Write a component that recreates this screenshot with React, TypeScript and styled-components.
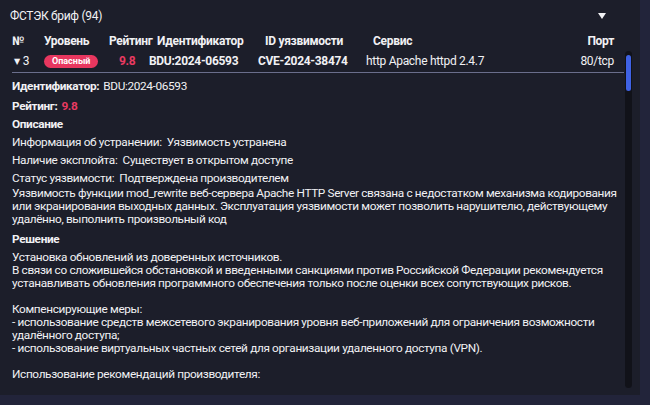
import React from "react";
import styled, { createGlobalStyle } from "styled-components";

const Global = createGlobalStyle`
  html, body { margin: 0; padding: 0; background: #22243a; }
  body {
    font-family: Roboto, "Noto Sans", "DejaVu Sans", sans-serif;
    color: #f1f1f4;
    letter-spacing: -0.3px;
  }
  * { box-sizing: border-box; }
`;

const Page = styled.div`
  width: 650px;
  height: 405px;
  padding: 0 10px 10px 0;
  background: #22243a;
`;

const Panel = styled.div`
  width: 640px;
  height: 395px;
  background: #1c1e2a;
  display: flex;
  flex-direction: column;
  padding-left: 10px;
  overflow: hidden;
`;

const TitleBar = styled.div`
  height: 31px;
  display: flex;
  align-items: center;
  justify-content: space-between;
  padding: 0 34px 0 0;
  font-size: 12px;
`;

const Caret = styled.span`
  width: 0;
  height: 0;
  border-left: 4.5px solid transparent;
  border-right: 4.5px solid transparent;
  border-top: 6px solid #f1f1f4;
`;

const cols = "32px 60px 45px 109px 108px 1fr 60px";

const HeaderRow = styled.div`
  display: grid;
  grid-template-columns: ${cols};
  align-items: center;
  height: 19px;
  padding: 0 26px 0 2px;
  font-size: 12px;
  font-weight: 700;
`;

const HeadCell = styled.div<{ $pad?: number; $right?: boolean }>`
  padding-left: ${(p) => p.$pad ?? 0}px;
  text-align: ${(p) => (p.$right ? "right" : "left")};
  white-space: nowrap;
`;

const Body = styled.div`
  flex: 1;
  display: flex;
  min-height: 0;
  padding-bottom: 7px;
`;

const Content = styled.div`
  flex: 1;
  overflow: hidden;
  min-width: 0;
`;

const ScrollTrack = styled.div`
  width: 7px;
  margin: 1px 8px 0 1px;
  background: #111219;
  border-radius: 4px;
  padding: 4px 1px;
`;

const ScrollThumb = styled.div`
  height: 36px;
  background: #3f62e4;
  border-radius: 3px;
`;

const DataRow = styled.div`
  display: grid;
  grid-template-columns: ${cols};
  align-items: center;
  height: 22px;
  padding: 0 10px 0 2px;
  font-size: 12px;
`;

const Cell = styled.div<{ $bold?: boolean; $pad?: number; $right?: boolean; $pink?: boolean }>`
  font-weight: ${(p) => (p.$bold ? 700 : 400)};
  padding-left: ${(p) => p.$pad ?? 0}px;
  color: ${(p) => (p.$pink ? "#ea3a62" : "inherit")};
  white-space: nowrap;
  display: flex;
  align-items: center;
  justify-content: ${(p) => (p.$right ? "flex-end" : "flex-start")};
`;

const Expander = styled.span`
  font-size: 8px;
  margin-right: 3px;
`;

const Badge = styled.span`
  display: inline-flex;
  align-items: center;
  justify-content: center;
  height: 13px;
  padding: 0 8px;
  border-radius: 7px;
  background: #e8375f;
  color: #fff;
  font-size: 9px;
  font-weight: 700;
  letter-spacing: 0;
`;

const Divider = styled.div`
  height: 1px;
  background: #6a6e8c;
  margin: 0 0 0 2px;
`;

const Details = styled.div`
  padding: 4px 2px 0 2px;
  font-size: 11.8px;
  letter-spacing: -0.35px;
`;

const Field = styled.div<{ $gap?: number }>`
  line-height: 18px;
  margin-bottom: ${(p) => p.$gap ?? 0}px;
`;

const Label = styled.span`
  font-weight: 700;
  margin-right: 4px;
`;

const Pink = styled.span`
  color: #ea3a62;
  font-weight: 700;
`;

const Heading = styled.div`
  font-weight: 700;
  line-height: 18px;
`;

const Para = styled.div<{ $top?: number; $bottom?: number }>`
  line-height: 13px;
  white-space: pre-line;
  margin-top: ${(p) => p.$top ?? 0}px;
  margin-bottom: ${(p) => p.$bottom ?? 0}px;
`;

const solution = `Установка обновлений из доверенных источников.
В связи со сложившейся обстановкой и введенными санкциями против Российской Федерации рекомендуется устанавливать обновления программного обеспечения только после оценки всех сопутствующих рисков.

Компенсирующие меры:
- использование средств межсетевого экранирования уровня веб-приложений для ограничения возможности удалённого доступа;
- использование виртуальных частных сетей для организации удаленного доступа (VPN).

Использование рекомендаций производителя:`;

export default function App() {
  return (
    <>
      <Global />
      <Page>
        <Panel>
          <TitleBar>
            <span>ФСТЭК бриф (94)</span>
            <Caret />
          </TitleBar>
          <HeaderRow>
            <HeadCell>№</HeadCell>
            <HeadCell>Уровень</HeadCell>
            <HeadCell $pad={5}>Рейтинг</HeadCell>
            <HeadCell $pad={8}>Идентификатор</HeadCell>
            <HeadCell $pad={7}>ID уязвимости</HeadCell>
            <HeadCell $pad={7}>Сервис</HeadCell>
            <HeadCell $right>Порт</HeadCell>
          </HeaderRow>
          <Body>
            <Content>
              <DataRow>
                <Cell $pad={2}>
                  <Expander>▼</Expander>3
                </Cell>
                <Cell>
                  <Badge>Опасный</Badge>
                </Cell>
                <Cell $bold $pink $pad={15}>9.8</Cell>
                <Cell $bold>BDU:2024-06593</Cell>
                <Cell $bold>CVE-2024-38474</Cell>
                <Cell>http Apache httpd 2.4.7</Cell>
                <Cell $right>80/tcp</Cell>
              </DataRow>
              <Divider />
              <Details>
                <Field $gap={2}>
                  <Label>Идентификатор:</Label>BDU:2024-06593
                </Field>
                <Field>
                  <Label>Рейтинг:</Label>
                  <Pink>9.8</Pink>
                </Field>
                <Heading>Описание</Heading>
                <Field>Информация об устранении: &nbsp;Уязвимость устранена</Field>
                <Field>Наличие эксплойта: &nbsp;Существует в открытом доступе</Field>
                <Field>Статус уязвимости: &nbsp;Подтверждена производителем</Field>
                <Para $bottom={4}>
                  Уязвимость функции mod_rewrite веб-сервера Apache HTTP Server связана с недостатком механизма кодирования или экранирования выходных данных. Эксплуатация уязвимости может позволить нарушителю, действующему удалённо, выполнить произвольный код
                </Para>
                <Heading>Решение</Heading>
                <Para $top={3}>{solution}</Para>
              </Details>
            </Content>
            <ScrollTrack>
              <ScrollThumb />
            </ScrollTrack>
          </Body>
        </Panel>
      </Page>
    </>
  );
}
